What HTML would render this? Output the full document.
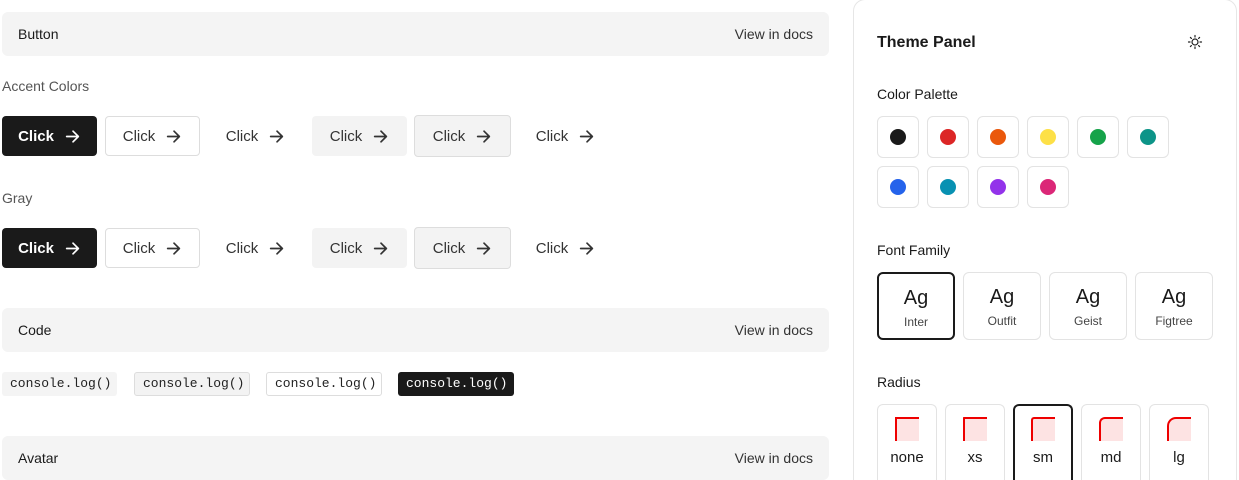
<!DOCTYPE html>
<html><head><meta charset="utf-8"><style>
*{box-sizing:border-box;margin:0;padding:0}
html,body{width:1239px;height:480px;overflow:hidden}
body{background:#fff;font-family:"Liberation Sans",sans-serif;color:#1a1a1a;position:relative}
.a{position:absolute}
.hdr{position:absolute;left:2px;width:827px;height:44px;background:#f4f4f4;border-radius:6px;font-size:14px}
.hdr .t{position:absolute;left:16px;top:14px}
.hdr .r{position:absolute;right:16px;top:14px;color:#333}
.lbl{position:absolute;left:2px;font-size:14px;color:#555}
.btn{position:absolute;height:40px;border-radius:4px;font-size:15px;display:flex;align-items:center;justify-content:center;gap:10px;color:#333}
.btn svg{width:17px;height:17px}
.dark{background:#1a1a1a;color:#fff;font-weight:bold}
.out{border:1px solid #ddd;background:#fff}
.soft{background:#f3f3f3}
.surf{background:#f3f3f3;border:1px solid #ddd;height:42px;margin-top:-1px}
.code{position:absolute;top:372px;height:24px;font-family:"Liberation Mono",monospace;font-size:13px;line-height:24px;padding:0 8px;border-radius:3px;color:#222}
.panel{position:absolute;left:853px;top:-1px;width:384px;height:481px;border:1px solid #e6e6e6;border-bottom:none;border-radius:12px 12px 0 0}
.sw{position:absolute;width:42px;height:42px;border:1px solid #e3e3e3;border-radius:6px}
.sw i{position:absolute;left:12px;top:12px;width:16px;height:16px;border-radius:50%}
.ff{position:absolute;top:272px;width:78px;height:68px;border:1px solid #e3e3e3;border-radius:6px;text-align:center}
.ff b{display:block;font-weight:normal;font-size:20px;margin-top:13px}
.ff span{display:block;font-size:12px;color:#444;margin-top:5px}
.rd{position:absolute;top:404px;width:60px;height:76px;border:1px solid #e3e3e3;border-bottom:none;border-radius:6px 6px 0 0;text-align:center}
.rd i{position:absolute;left:17px;top:12px;width:24px;height:24px;background:#fde3e3;border-top:2px solid #e00;border-left:2px solid #e00}
.rd span{position:absolute;left:0;right:0;top:44px;font-size:15px}
.sel{border:2px solid #1a1a1a;border-bottom:none}
.ff.sel{border-bottom:2px solid #1a1a1a}
</style></head><body>
<svg width="0" height="0" style="position:absolute"><defs><symbol id="ar" viewBox="0 0 16 16"><path d="M2.5 8h11M8.5 3l5 5-5 5" fill="none" stroke="currentColor" stroke-width="1.6" stroke-linecap="round" stroke-linejoin="round"/></symbol></defs></svg>

<div class="hdr" style="top:12px"><span class="t">Button</span><span class="r">View in docs</span></div>
<div class="lbl" style="top:78px">Accent Colors</div>
<div class="btn dark" style="left:2px;top:116px;width:95px">Click<svg><use href="#ar"/></svg></div>
<div class="btn out" style="left:105px;top:116px;width:95px">Click<svg><use href="#ar"/></svg></div>
<div class="btn" style="left:208px;top:116px;width:95px">Click<svg><use href="#ar"/></svg></div>
<div class="btn soft" style="left:312px;top:116px;width:95px">Click<svg><use href="#ar"/></svg></div>
<div class="btn surf" style="left:414px;top:116px;width:97px">Click<svg><use href="#ar"/></svg></div>
<div class="btn" style="left:518px;top:116px;width:95px">Click<svg><use href="#ar"/></svg></div>

<div class="lbl" style="top:190px">Gray</div>
<div class="btn dark" style="left:2px;top:228px;width:95px">Click<svg><use href="#ar"/></svg></div>
<div class="btn out" style="left:105px;top:228px;width:95px">Click<svg><use href="#ar"/></svg></div>
<div class="btn" style="left:208px;top:228px;width:95px">Click<svg><use href="#ar"/></svg></div>
<div class="btn soft" style="left:312px;top:228px;width:95px">Click<svg><use href="#ar"/></svg></div>
<div class="btn surf" style="left:414px;top:228px;width:97px">Click<svg><use href="#ar"/></svg></div>
<div class="btn" style="left:518px;top:228px;width:95px">Click<svg><use href="#ar"/></svg></div>

<div class="hdr" style="top:308px"><span class="t">Code</span><span class="r">View in docs</span></div>
<div class="code" style="left:2px;width:115px;background:#f4f4f4">console.log()</div>
<div class="code" style="left:134px;width:116px;background:#f3f3f3;border:1px solid #ddd;line-height:22px">console.log()</div>
<div class="code" style="left:266px;width:116px;border:1px solid #ddd;line-height:22px">console.log()</div>
<div class="code" style="left:398px;width:116px;background:#1a1a1a;color:#fff">console.log()</div>

<div class="hdr" style="top:436px"><span class="t">Avatar</span><span class="r">View in docs</span></div>

<div class="panel"></div>
<div class="a" style="left:877px;top:34px;font-size:16px;font-weight:bold">Theme Panel</div>
<svg class="a" style="left:1187px;top:34px" width="16" height="16" viewBox="0 0 16 16" fill="none" stroke="#222" stroke-width="1.2" stroke-linecap="round"><circle cx="8" cy="8" r="3"/><path d="M8 1.5v1.5M8 13v1.5M1.5 8H3M13 8h1.5M3.4 3.4l1 1M11.6 11.6l1 1M3.4 12.6l1-1M11.6 4.4l1-1"/></svg>
<div class="a" style="left:877px;top:86px;font-size:14px">Color Palette</div>
<div class="sw" style="left:877px;top:116px"><i style="background:#1a1a1a"></i></div>
<div class="sw" style="left:927px;top:116px"><i style="background:#dc2626"></i></div>
<div class="sw" style="left:977px;top:116px"><i style="background:#ea580c"></i></div>
<div class="sw" style="left:1027px;top:116px"><i style="background:#fde047"></i></div>
<div class="sw" style="left:1077px;top:116px"><i style="background:#16a34a"></i></div>
<div class="sw" style="left:1127px;top:116px"><i style="background:#0d9488"></i></div>
<div class="sw" style="left:877px;top:166px"><i style="background:#2563eb"></i></div>
<div class="sw" style="left:927px;top:166px"><i style="background:#0891b2"></i></div>
<div class="sw" style="left:977px;top:166px"><i style="background:#9333ea"></i></div>
<div class="sw" style="left:1027px;top:166px"><i style="background:#db2777"></i></div>
<div class="a" style="left:877px;top:242px;font-size:14px">Font Family</div>
<div class="ff sel" style="left:877px"><b>Ag</b><span>Inter</span></div>
<div class="ff" style="left:963px"><b>Ag</b><span>Outfit</span></div>
<div class="ff" style="left:1049px"><b>Ag</b><span>Geist</span></div>
<div class="ff" style="left:1135px"><b>Ag</b><span>Figtree</span></div>
<div class="a" style="left:877px;top:374px;font-size:14px">Radius</div>
<div class="rd" style="left:877px"><i></i><span>none</span></div>
<div class="rd" style="left:945px"><i style="border-top-left-radius:1px"></i><span>xs</span></div>
<div class="rd sel" style="left:1013px"><i style="border-top-left-radius:3px;left:16px;top:11px"></i><span style="top:43px">sm</span></div>
<div class="rd" style="left:1081px"><i style="border-top-left-radius:6px"></i><span>md</span></div>
<div class="rd" style="left:1149px"><i style="border-top-left-radius:9px"></i><span>lg</span></div>
</body></html>
